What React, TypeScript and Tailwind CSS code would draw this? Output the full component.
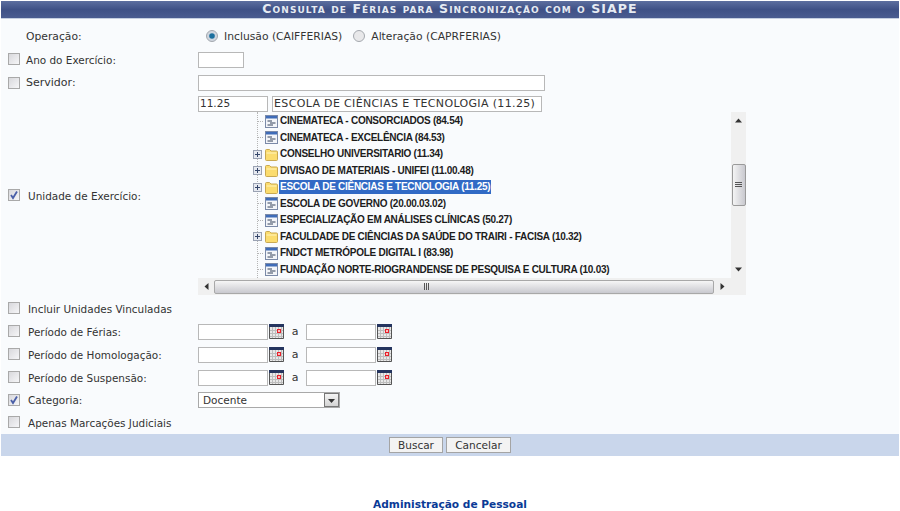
import React from "react";

const Check = ({ on = false }: { on?: boolean }) => (
  <span className="flex h-[12px] w-[12px] shrink-0 items-center justify-center border border-[#a9a9a9] bg-gradient-to-br from-[#d8d8dc] to-[#f6f6f8]">
    {on && (
      <svg width="10" height="10" viewBox="0 0 10 10">
        <path d="M2 5 L4 8 L8 1.5" fill="none" stroke="#4a5fa8" strokeWidth="1.8" />
      </svg>
    )}
  </span>
);

const Radio = ({ on = false }: { on?: boolean }) => (
  <svg width="12" height="12" viewBox="0 0 12 12" className="shrink-0">
    <circle cx="6" cy="6" r="5.5" fill={on ? "#cfd6df" : "#e8e8ea"} stroke="#a4a8ae" />
    {on && <circle cx="6" cy="6" r="2.8" fill="#1b6f9e" />}
  </svg>
);

const Field = ({ w, value = "", cls = "text-[10.5px]" }: { w: string; value?: string; cls?: string }) => (
  <span className={`flex h-[16px] items-center whitespace-nowrap border border-[#b8b8b8] bg-white pl-[1px] text-[#333] shrink-0 ${w} ${cls}`}>{value}</span>
);

const Calendar = () => (
  <svg width="15" height="15" viewBox="0 0 15 15" className="shrink-0">
    <rect x="0" y="0" width="15" height="15" fill="#e8e8e8" />
    <path d="M3.5 3V14M6.5 3V14M9.5 3V14M12.5 3V14M0 6.5H15M0 9.5H15M0 12.5H15" stroke="#bdbdbd" strokeWidth="1" />
    <rect x="0" y="0" width="15" height="3" fill="#25355f" />
    <path d="M0.5 3V14.5H14.5V3" fill="none" stroke="#555" />
    <rect x="8.5" y="5.5" width="3" height="3" fill="#fbb" stroke="#e8202a" />
  </svg>
);

const Doc = () => (
  <svg width="13" height="13" viewBox="0 0 13 13" className="shrink-0">
    <rect x="0.5" y="0.5" width="12" height="12" fill="#f3f5f9" stroke="#7b8aa8" />
    <rect x="1" y="1" width="11" height="2.5" fill="#3f6cb8" />
    <path d="M2.5 6H7M5 8H10.5M2.5 10H8" stroke="#35425a" />
  </svg>
);

const Folder = () => (
  <svg width="13" height="13" viewBox="0 0 13 13" className="shrink-0">
    <path d="M0.5 11.5V2.5Q0.5 1.5 1.5 1.5H4.5L6 3H11.5Q12.5 3 12.5 4V11.5Q12.5 12.5 11.5 12.5H1.5Q0.5 12.5 0.5 11.5Z" fill="#fbdc6e" stroke="#c9a951" />
    <path d="M1.5 5H11.5" stroke="#fff3bd" />
  </svg>
);

const Plus = () => (
  <svg width="9" height="9" viewBox="0 0 9 9" className="shrink-0">
    <rect x="0.5" y="0.5" width="8" height="8" fill="#e6e9f0" stroke="#9aa2b3" />
    <path d="M2 4.5H7M4.5 2V7" stroke="#36476b" />
  </svg>
);

const Tri = ({ d }: { d: string }) => (
  <svg width="7" height="7" viewBox="0 0 7 7">
    <path d={d} fill="#333" />
  </svg>
);

const Grip = ({ vertical = false }: { vertical?: boolean }) => (
  <svg width="8" height="8" viewBox="0 0 8 8">
    <path d={vertical ? "M0 1.5H7M0 3.5H7M0 5.5H7" : "M1.5 0V7M3.5 0V7M5.5 0V7"} stroke="#555" />
  </svg>
);

const tree: { t: string; kind: "doc" | "folder"; sel?: boolean }[] = [
  { t: "CINEMATECA - CONSORCIADOS (84.54)", kind: "doc" },
  { t: "CINEMATECA - EXCELÊNCIA (84.53)", kind: "doc" },
  { t: "CONSELHO UNIVERSITARIO (11.34)", kind: "folder" },
  { t: "DIVISAO DE MATERIAIS - UNIFEI (11.00.48)", kind: "folder" },
  { t: "ESCOLA DE CIÊNCIAS E TECNOLOGIA (11.25)", kind: "folder", sel: true },
  { t: "ESCOLA DE GOVERNO (20.00.03.02)", kind: "doc" },
  { t: "ESPECIALIZAÇÃO EM ANÁLISES CLÍNICAS (50.27)", kind: "doc" },
  { t: "FACULDADE DE CIÊNCIAS DA SAÚDE DO TRAIRI - FACISA (10.32)", kind: "folder" },
  { t: "FNDCT METRÓPOLE DIGITAL I (83.98)", kind: "doc" },
  { t: "FUNDAÇÃO NORTE-RIOGRANDENSE DE PESQUISA E CULTURA (10.03)", kind: "doc" },
];

const Row = ({ label, on, h = "h-[23px]", box = true, indent = "pl-[7px]", gap = "gap-[8px]", size = "text-[10.45px]", children }: { label: string; on?: boolean; h?: string; box?: boolean; indent?: string; gap?: string; size?: string; children?: React.ReactNode }) => (
  <div className={`flex items-center ${h}`}>
    <div className={`flex w-[197px] shrink-0 items-center ${gap} ${indent}`}>
      {box && <Check on={on} />}
      <span className={`pt-[2px] ${size}`}>{label}</span>
    </div>
    {children}
  </div>
);

const Dates = () => (
  <div className="flex items-center">
    <Field w="w-[70px]" />
    <span className="ml-[1px]"><Calendar /></span>
    <span className="w-[22px] pt-[2px] text-center">a</span>
    <Field w="w-[70px]" />
    <span className="ml-[1px]"><Calendar /></span>
  </div>
);

export default function App() {
  return (
    <div className="h-[511px] w-[900px] bg-white pt-[1px] text-[11px] text-[#333] [font-family:'DejaVu_Sans',sans-serif]">
      <div className="mx-[1px]">
        <div className="flex h-[18px] items-center justify-center border-b border-[#c4cfe0] bg-gradient-to-b from-[#5d6f9f] via-[#3f5186] to-[#4a5c90] text-[12.5px] font-bold tracking-[1.08px] text-[#e6ebf2] [font-variant:small-caps]">
          Consulta de Férias para Sincronização com o SIAPE
        </div>
        <div className="bg-[#f9fbfd] pt-[5px]">
          <Row label="Operação:" box={false} indent="pl-[25px]" h="h-[24px]" size="text-[10.75px]">
            <div className="flex items-center pl-[8px] text-[10.75px]">
              <Radio on />
              <span className="ml-[6px] pt-[2px]">Inclusão (CAIFFERIAS)</span>
              <span className="ml-[11px]"><Radio /></span>
              <span className="ml-[6px] pt-[2px]">Alteração (CAPRFERIAS)</span>
            </div>
          </Row>
          <Row label="Ano do Exercício:" gap="gap-[6px]"><Field w="w-[46px]" /></Row>
          <Row label="Servidor:" gap="gap-[6px]" size="text-[11px]"><Field w="w-[347px]" /></Row>
          <div className="flex h-[203px] items-center">
            <div className="flex w-[197px] shrink-0 items-center gap-[8px] pl-[7px]">
              <Check on />
              <span className="pt-[2px] text-[10.45px]">Unidade de Exercício:</span>
            </div>
            <div className="flex h-[203px] w-[548px] flex-col pt-[2px]">
              <div className="flex items-center gap-[4px]">
                <Field w="w-[70px]" value="11.25" />
                <Field w="w-[270px]" value="ESCOLA DE CIÊNCIAS E TECNOLOGIA (11.25)" cls="text-[11px] tracking-[0.35px]" />
              </div>
              <div className="flex h-[166px]">
                <div className="relative flex-1 overflow-hidden pl-[55px] pt-[1px] font-bold text-[10px] tracking-[-0.27px] text-[#1c1c1c] [font-family:'Liberation_Sans',sans-serif]">
                  <div className="absolute left-[59px] top-0 h-full border-l border-dotted border-[#b5b5b5]" />
                  {tree.map((n) => (
                    <div key={n.t} className="relative flex h-[16.5px] items-center">
                      {n.kind === "folder" ? <Plus /> : <span className="ml-[5px] w-[5px] shrink-0 border-t border-dotted border-[#b5b5b5]" />}
                      <span className={n.kind === "folder" ? "ml-[3px]" : "ml-[2px]"}>{n.kind === "folder" ? <Folder /> : <Doc />}</span>
                      <span className={`ml-[1px] whitespace-nowrap px-[1px] leading-[14px] ${n.sel ? "bg-[#316ac5] text-white" : ""}`}>{n.t}</span>
                    </div>
                  ))}
                </div>
                <div className="flex w-[15px] shrink-0 flex-col items-center bg-[#f0f0f0]">
                  <div className="flex h-[17px] items-center justify-center"><Tri d="M3.5 1.5 L7 5.5 H0 Z" /></div>
                  <div className="mt-[35px] flex h-[42px] w-[14px] items-center justify-center rounded-[2px] border border-[#9a9a9a] bg-gradient-to-r from-[#f4f4f4] to-[#c9c9cf]"><Grip vertical /></div>
                  <div className="flex-1" />
                  <div className="flex h-[17px] items-center justify-center"><Tri d="M0 1.5 H7 L3.5 5.5 Z" /></div>
                </div>
              </div>
              <div className="flex h-[17px] items-center bg-[#f0f0f0]">
                <div className="flex w-[16px] shrink-0 items-center justify-center"><Tri d="M1.5 3.5 L5.5 0 V7 Z" /></div>
                <div className="flex h-[14px] w-[500px] shrink-0 items-center justify-center rounded-[2px] border border-[#a8a8a8] bg-gradient-to-b from-[#f6f6f6] to-[#c9c9cf] pr-[74px]"><Grip /></div>
                <div className="flex w-[16px] shrink-0 items-center justify-center"><Tri d="M5.5 3.5 L1.5 0 V7 Z" /></div>
              </div>
            </div>
          </div>
          <Row label="Incluir Unidades Vinculadas" />
          <Row label="Período de Férias:"><Dates /></Row>
          <Row label="Período de Homologação:"><Dates /></Row>
          <Row label="Período de Suspensão:"><Dates /></Row>
          <Row label="Categoria:" on h="h-[22px]">
            <div className="flex h-[16px] w-[142px] items-center justify-between border border-[#a9a9a9] bg-white pl-[4px] text-[10.5px]">
              <span className="pt-[1px]">Docente</span>
              <span className="flex h-[14px] w-[15px] items-center justify-center border border-[#777] bg-gradient-to-b from-[#f4f4f4] to-[#d4d4d4]"><Tri d="M0 2 H7 L3.5 6 Z" /></span>
            </div>
          </Row>
          <Row label="Apenas Marcações Judiciais" />
        </div>
        <div className="flex h-[22px] items-center justify-center gap-[3px] bg-[#c9d6eb]">
          <button className="flex h-[16px] w-[54px] items-center justify-center border border-[#a4a4a4] bg-[#f3f3f3] pt-[1px] text-[10.5px] text-[#333]">Buscar</button>
          <button className="flex h-[16px] w-[65px] items-center justify-center border border-[#a4a4a4] bg-[#f3f3f3] pt-[1px] text-[10.6px] text-[#333]">Cancelar</button>
        </div>
      </div>
      <div className="mt-[41px] text-center text-[10.6px] font-bold text-[#0a3a96]">Administração de Pessoal</div>
    </div>
  );
}
